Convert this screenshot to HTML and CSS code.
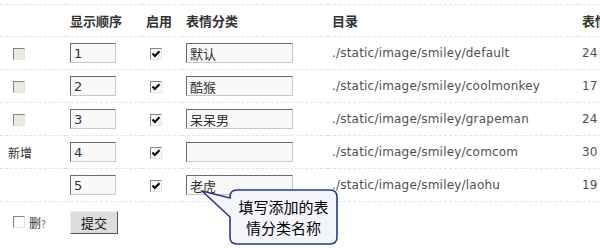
FILE: index.html
```html
<!DOCTYPE html>
<html lang="zh-CN">
<head>
<meta charset="UTF-8">
<title>表情管理</title>
<link rel="stylesheet" href="styles.css">
</head>
<body>

<div class="page">
  <table class="smiley-table">
    <colgroup>
      <col class="c-del"><col class="c-order"><col class="c-on"><col class="c-name"><col class="c-dir"><col class="c-num">
    </colgroup>
    <tr class="head">
      <th></th>
      <th>显示顺序</th>
      <th>启用</th>
      <th>表情分类</th>
      <th>目录</th>
      <th>表情数</th>
    </tr>
    <tr>
      <td><span class="cb off"></span></td>
      <td><input class="txt order" type="text" value="1"></td>
      <td><span class="cb on"><svg viewBox="0 0 10 10"><path d="M1.5 4.5 L3.8 7 L8.5 2.2"/></svg></span></td>
      <td><input class="txt name" type="text" value="默认"></td>
      <td class="dir">./static/image/smiley/default</td>
      <td class="num">24</td>
    </tr>
    <tr>
      <td><span class="cb off"></span></td>
      <td><input class="txt order" type="text" value="2"></td>
      <td><span class="cb on"><svg viewBox="0 0 10 10"><path d="M1.5 4.5 L3.8 7 L8.5 2.2"/></svg></span></td>
      <td><input class="txt name" type="text" value="酷猴"></td>
      <td class="dir">./static/image/smiley/coolmonkey</td>
      <td class="num">17</td>
    </tr>
    <tr>
      <td><span class="cb off"></span></td>
      <td><input class="txt order" type="text" value="3"></td>
      <td><span class="cb on"><svg viewBox="0 0 10 10"><path d="M1.5 4.5 L3.8 7 L8.5 2.2"/></svg></span></td>
      <td><input class="txt name" type="text" value="呆呆男"></td>
      <td class="dir">./static/image/smiley/grapeman</td>
      <td class="num">24</td>
    </tr>
    <tr>
      <td class="label">新增</td>
      <td><input class="txt order" type="text" value="4"></td>
      <td><span class="cb on"><svg viewBox="0 0 10 10"><path d="M1.5 4.5 L3.8 7 L8.5 2.2"/></svg></span></td>
      <td><input class="txt name" type="text" value=""></td>
      <td class="dir">./static/image/smiley/comcom</td>
      <td class="num">30</td>
    </tr>
    <tr>
      <td></td>
      <td><input class="txt order" type="text" value="5"></td>
      <td><span class="cb on"><svg viewBox="0 0 10 10"><path d="M1.5 4.5 L3.8 7 L8.5 2.2"/></svg></span></td>
      <td><input class="txt name" type="text" value="老虎"></td>
      <td class="dir">./static/image/smiley/laohu</td>
      <td class="num">19</td>
    </tr>
    <tr class="foot">
      <td><span class="cb plain"></span><span class="del">删<small>?</small></span></td>
      <td colspan="5"><button class="btn" type="button">提交</button></td>
    </tr>
  </table>

  <div class="tip">
    <svg class="tip-shape" viewBox="0 0 146 62" width="146" height="62">
      <path d="M41 4 H134 Q141 4 141 11 V51 Q141 58 134 58 H41 Q34 58 34 51 V31 L6 5 L34 12 V11 Q34 4 41 4 Z"/>
    </svg>
    <div class="tip-text">填写添加的表<br>情分类名称</div>
  </div>
</div>

</body>
</html>
```

FILE: styles.css
```css
body {
  margin: 0;
  background: #fff;
  font-family: "DejaVu Sans", "Noto Sans CJK SC", sans-serif;
  font-size: 12px;
  color: #333;
}
.page {
  position: relative;
  width: 600px;
  height: 250px;
  overflow: hidden;
}
.smiley-table {
  margin-top: 4px;
  width: 660px;
  border-collapse: collapse;
  table-layout: fixed;
}
.c-del { width: 66px; }
.c-order { width: 76px; }
.c-on { width: 40px; }
.c-name { width: 146px; }
.c-dir { width: 250px; }
.c-num { width: 82px; }

.smiley-table th,
.smiley-table td {
  padding: 0 0 0 4px;
  text-align: left;
  vertical-align: middle;
  border-top: 1px dashed #d3e8f6;
  white-space: nowrap;
}
.smiley-table th {
  height: 31px;
  font-family: "Noto Sans CJK SC", sans-serif;
  font-size: 13px;
  font-weight: bold;
  color: #333;
}
.smiley-table td {
  height: 32px;
}
.smiley-table tr th:first-child,
.smiley-table tr td:first-child {
  padding-left: 8px;
}
.smiley-table .foot td {
  height: 40px;
}

.label {
  font-family: "Noto Sans CJK SC", sans-serif;
  font-size: 12px;
  color: #333;
}
.dir,
.num {
  color: #505050;
  letter-spacing: 0.2px;
}

.txt {
  box-sizing: border-box;
  height: 20px;
  margin: 0;
  padding: 1px 3px 0;
  border: 1px solid;
  border-color: #6a6a6a #c8c8c8 #c8c8c8 #6a6a6a;
  background: #f9f9f9;
  font-family: "DejaVu Sans", "Noto Sans CJK SC", sans-serif;
  font-size: 13px;
  color: #333;
  vertical-align: middle;
  outline: none;
}
.order { width: 46px; }
.name { width: 107px; }

.cb {
  display: inline-block;
  box-sizing: border-box;
  width: 12px;
  height: 12px;
  border: 1px solid;
  border-color: #858585 #e6e4d6 #e6e4d6 #858585;
  vertical-align: middle;
}
.cb svg {
  display: block;
  width: 10px;
  height: 10px;
}
.cb svg path {
  fill: none;
  stroke: #000;
  stroke-width: 2;
}
.cb.off {
  margin-left: 5px;
  background: #ecebd9;
}
.cb.on {
  margin-left: 4px;
  background: #fbfbf6;
}
.cb.plain {
  margin-left: 5px;
  background: #fff;
}
.del {
  margin-left: 4px;
  font-family: "Noto Sans CJK SC", sans-serif;
  font-size: 12px;
  color: #333;
  vertical-align: middle;
}
.del small {
  font-size: 10px;
  color: #666;
}

.btn {
  width: 48px;
  height: 23px;
  margin: 0;
  padding: 0;
  border: 1px solid;
  border-color: #f2f2f2 #555 #555 #f2f2f2;
  background: #dcdcdc;
  font-family: "Noto Sans CJK SC", sans-serif;
  font-size: 13px;
  color: #111;
  vertical-align: middle;
}

.tip {
  position: absolute;
  left: 196px;
  top: 186px;
  width: 146px;
  height: 62px;
}
.tip-shape {
  position: absolute;
  left: 0;
  top: 0;
}
.tip-shape path {
  fill: #f3f5fb;
  stroke: #29388a;
  stroke-width: 1.6;
  stroke-linejoin: round;
}
.tip-text {
  position: absolute;
  left: 34px;
  top: 10px;
  width: 107px;
  text-align: center;
  font-family: "Noto Sans CJK SC", sans-serif;
  font-size: 15px;
  line-height: 21px;
  color: #000;
}
```
